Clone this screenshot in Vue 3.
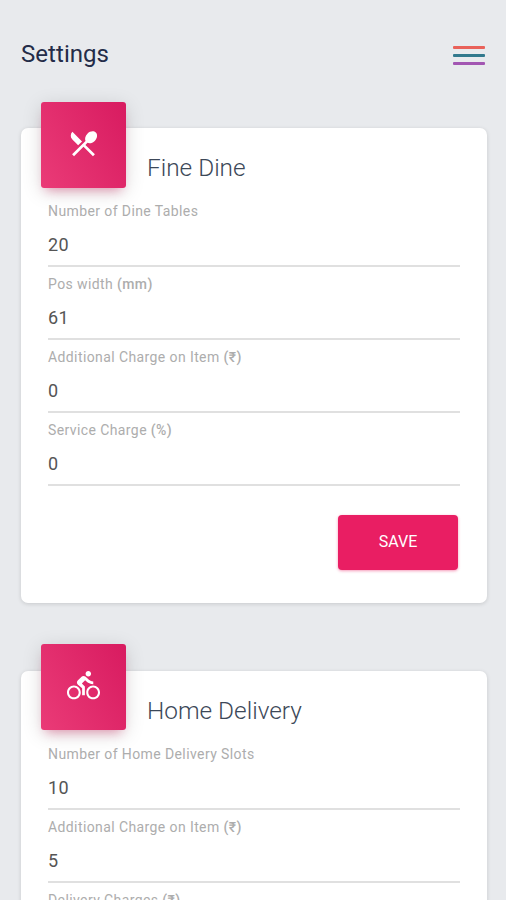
<script setup>
const cards = [
  {
    title: 'Fine Dine',
    size: 33,
    icon: 'M8.1 13.34l2.83-2.83L3.91 3.5c-1.56 1.56-1.56 4.09 0 5.66l4.19 4.18zm6.78-1.81c1.53.71 3.68.21 5.27-1.38 1.91-1.91 2.28-4.65.81-6.12-1.46-1.46-4.2-1.1-6.12.81-1.59 1.59-2.09 3.74-1.38 5.27L3.7 19.87l1.41 1.41L12 14.41l6.88 6.88 1.41-1.41L13.41 13l1.47-1.47z',
    fields: [
      { label: 'Number of Dine Tables', unit: '', value: '20' },
      { label: 'Pos width', unit: '(mm)', value: '61' },
      { label: 'Additional Charge on Item', unit: '(₹)', value: '0' },
      { label: 'Service Charge', unit: '(%)', value: '0' },
    ],
  },
  {
    title: 'Home Delivery',
    size: 33,
    icon: 'M15.5 5.5c1.1 0 2-.9 2-2s-.9-2-2-2-2 .9-2 2 .9 2 2 2zM5 12c-2.8 0-5 2.2-5 5s2.2 5 5 5 5-2.2 5-5-2.2-5-5-5zm0 8.5c-1.9 0-3.5-1.6-3.5-3.5s1.6-3.5 3.5-3.5 3.5 1.6 3.5 3.5-1.6 3.5-3.5 3.5zm5.8-10l2.4-2.4.8.8c1.3 1.3 3 2.1 5.1 2.1V9c-1.5 0-2.7-.6-3.6-1.5l-1.9-1.9c-.5-.4-1-.6-1.6-.6s-1.1.2-1.4.6L7.8 8.4c-.4.4-.6.9-.6 1.4 0 .6.2 1.1.6 1.4L11 14v5h2v-6.2l-2.2-2.3zM19 12c-2.8 0-5 2.2-5 5s2.2 5 5 5 5-2.2 5-5-2.2-5-5-5zm0 8.5c-1.9 0-3.5-1.6-3.5-3.5s1.6-3.5 3.5-3.5 3.5 1.6 3.5 3.5-1.6 3.5-3.5 3.5z',
    fields: [
      { label: 'Number of Home Delivery Slots', unit: '', value: '10' },
      { label: 'Additional Charge on Item', unit: '(₹)', value: '5' },
      { label: 'Delivery Charges', unit: '(₹)', value: '0' },
    ],
  },
]
</script>

<template>
  <div class="page">
    <header class="topbar">
      <h1>Settings</h1>
      <button class="menu" aria-label="Menu">
        <span class="bar red"></span>
        <span class="bar teal"></span>
        <span class="bar purple"></span>
      </button>
    </header>
    <main>
      <section v-for="card in cards" :key="card.title" class="card">
        <div class="card-head">
          <div class="tile">
            <svg :width="card.size" :height="card.size" viewBox="0 0 24 24" fill="#fff">
              <path :d="card.icon" />
            </svg>
          </div>
          <h2>{{ card.title }}</h2>
        </div>
        <div class="fields">
          <div v-for="field in card.fields" :key="field.label" class="field">
            <div class="label">{{ field.label }} <b v-if="field.unit">{{ field.unit }}</b></div>
            <div class="value">{{ field.value }}</div>
          </div>
        </div>
        <div class="actions"><button class="save">SAVE</button></div>
      </section>
    </main>
  </div>
</template>

<style>
body {
  background: #e8eaed;
}
</style>

<style scoped>
.page {
  height: 900px;
  overflow: hidden;
  background: #e8eaed;
  font-family: Roboto, "Noto Sans", sans-serif;
}
.topbar {
  display: flex;
  justify-content: space-between;
  align-items: flex-start;
  height: 128.4px;
  padding: 38px 21px 0;
  box-sizing: border-box;
}
h1 {
  margin: 0;
  font-size: 24px;
  line-height: 32px;
  font-weight: 400;
  letter-spacing: 0.05px;
  color: #242c48;
}
.menu {
  display: flex;
  flex-direction: column;
  gap: 5px;
  width: 32px;
  margin-top: 8px;
  padding: 0;
  border: 0;
  background: none;
}
.bar {
  height: 3px;
  border-radius: 1px;
}
.red { background: #e9625a; }
.teal { background: #32798d; }
.purple { background: #a256b2; }
.card {
  height: 475px;
  margin: 0 19.5px 67.5px 21px;
  padding: 0 26.5px 0 27px;
  box-sizing: border-box;
  border-radius: 7px;
  background: #fff;
  box-shadow: 0 1px 4px rgba(0, 0, 0, 0.14);
}
.card-head {
  display: flex;
  align-items: flex-start;
  height: 74px;
  margin-left: -7px;
}
.tile {
  display: flex;
  align-items: center;
  justify-content: center;
  width: 85px;
  height: 86px;
  margin-top: -26.5px;
  padding-bottom: 3px;
  box-sizing: border-box;
  border-radius: 3px;
  background: linear-gradient(60deg, #ea3b77, #d81b60);
  box-shadow: 0 4px 20px rgba(0, 0, 0, 0.14), 0 7px 10px -5px rgba(233, 30, 99, 0.4);
}
h2 {
  margin: 24px 0 0 21px;
  font-size: 24.4px;
  line-height: 32px;
  font-weight: 300;
  color: #3c4858;
}
.field {
  height: 73px;
  box-sizing: border-box;
  border-bottom: 2px solid #e0e0e0;
  padding-top: 7px;
}
.fields {
  margin-top: -8px;
}
.label {
  font-size: 14px;
  line-height: 20px;
  letter-spacing: 0.4px;
  color: #adadad;
}
.label b {
  font-weight: 500;
}
.value {
  margin-top: 11px;
  font-size: 18px;
  line-height: 26px;
  letter-spacing: 0.3px;
  color: #555;
}
.actions {
  display: flex;
  justify-content: flex-end;
  padding: 29px 2px 0;
}
.save {
  width: 120px;
  height: 55px;
  padding: 0 0 2px;
  border: 0;
  border-radius: 4px;
  background: #e91e63;
  box-shadow: 0 1px 3px rgba(233, 30, 99, 0.45);
  color: #fff;
  font: 400 16px Roboto, sans-serif;
}
</style>
